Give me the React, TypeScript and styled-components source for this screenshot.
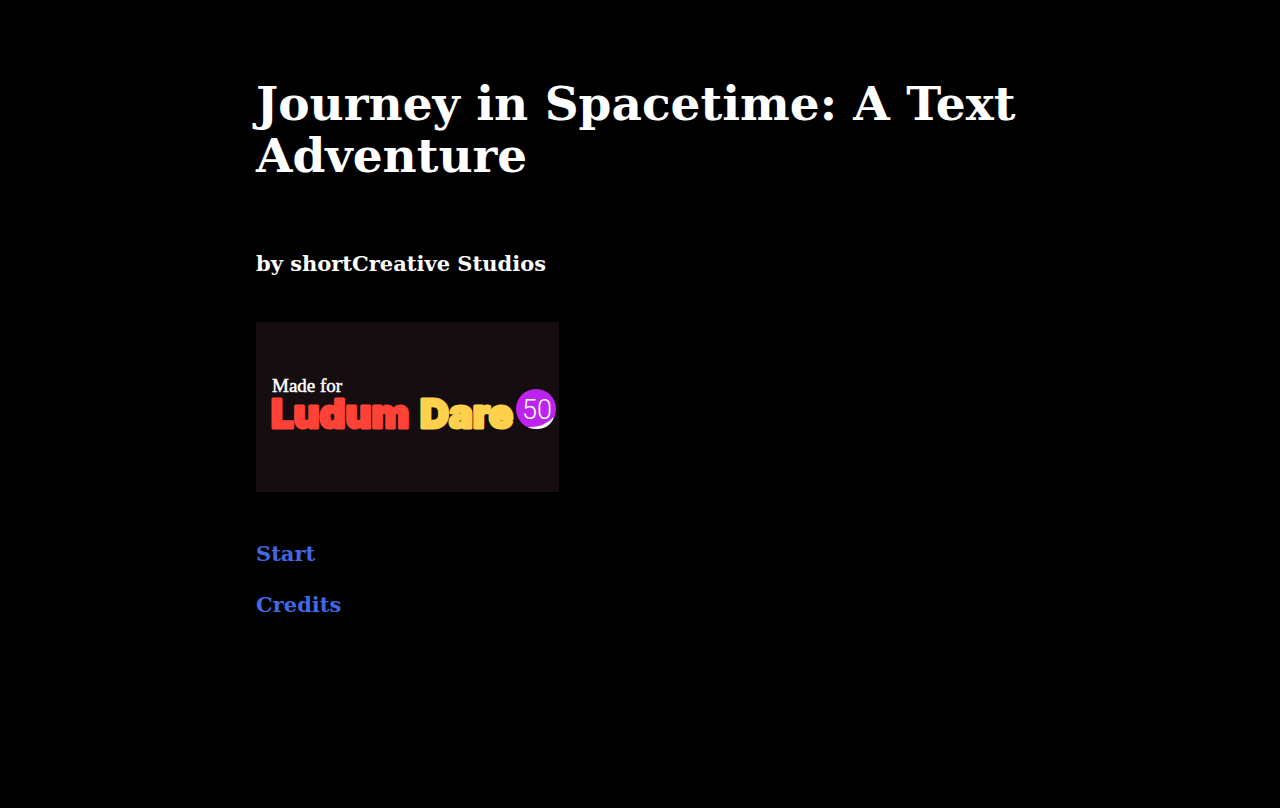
import React from "react";
import styled, { createGlobalStyle } from "styled-components";

const GlobalStyle = createGlobalStyle`
  body {
    margin: 0;
    background: #000;
    color: #fff;
    font-family: Georgia, "DejaVu Serif", serif;
  }
`;

const Passage = styled.main`
  padding: 78px 20%;
`;

const Title = styled.h1`
  margin: 0;
  font-size: 47px;
  line-height: 52px;
  font-weight: 700;
`;

const Byline = styled.p`
  margin: 66px 0 42px;
  font-size: 21px;
  line-height: 32px;
  font-weight: 700;
`;

const Banner = styled.svg`
  display: block;
  width: 303px;
  max-width: 100%;
  height: auto;
`;

const Choices = styled.nav`
  display: flex;
  flex-direction: column;
  align-items: flex-start;
  gap: 19px;
  margin-top: 46px;
`;

const Choice = styled.a`
  color: #4169e1;
  font-size: 21px;
  line-height: 32px;
  font-weight: 700;
  text-decoration: none;

  &:hover {
    color: #00ffff;
  }
`;

const MadeFor = styled.text`
  fill: #fff;
  font-family: "Liberation Serif", serif;
  font-size: 19px;
  stroke: #fff;
  stroke-width: 0.5px;
`;

const Wordmark = styled.text<{ $color: string }>`
  fill: ${(p) => p.$color};
  stroke: ${(p) => p.$color};
  stroke-width: 3px;
  stroke-linejoin: round;
  font-family: Inter, sans-serif;
  font-size: 40px;
  font-weight: 900;
`;

const Edition = styled.text`
  fill: #fff;
  font-family: Roboto, sans-serif;
  font-size: 27px;
  font-weight: 300;
  text-anchor: middle;
`;

export default function App() {
  return (
    <>
      <GlobalStyle />
      <Passage>
        <Title>Journey in Spacetime: A Text Adventure</Title>
        <Byline>by shortCreative Studios</Byline>
        <Banner viewBox="0 0 303 170" role="img" aria-label="Made for Ludum Dare 50">
          <rect width="303" height="170" fill="#160d10" />
          <MadeFor x="16" y="70">Made for</MadeFor>
          <Wordmark $color="#ff4236" x="15" y="106">Ludum</Wordmark>
          <Wordmark $color="#ffd04b" x="164" y="106">Dare</Wordmark>
          <circle cx="280" cy="87" r="20" fill="#bd22ee" />
          <path d="M272 105 Q287 106 298 95 Q294 107 280 107 Q275 107 272 105Z" fill="#fff" />
          <Edition x="281" y="97">50</Edition>
        </Banner>
        <Choices>
          <Choice href="#start">Start</Choice>
          <Choice href="#credits">Credits</Choice>
        </Choices>
      </Passage>
    </>
  );
}
